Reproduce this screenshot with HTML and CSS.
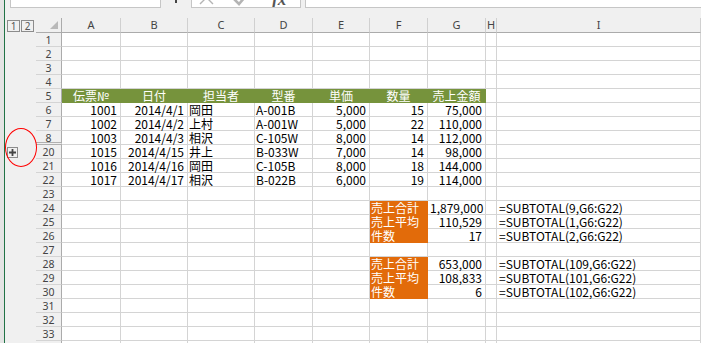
FILE: index.html
```html
<!DOCTYPE html>
<html lang="ja">
<head>
  <meta charset="UTF-8">
  <meta name="viewport" content="width=device-width, initial-scale=1.0">
  <title>SUBTOTAL</title>
  <link rel="stylesheet" href="styles.css">
</head>

<body>
  <div class="edge"></div>
  <div class="window">
    <div class="formula-bar">
      <div class="namebox"><span class="nb-text">B14</span></div>
      <div class="nb-drop"><i></i></div>
      <div class="fxbox">
        <svg width="108" height="7" viewBox="0 0 108 7">
          <path d="M8 -9L21 4M21 -9L8 4" stroke="#b4b4b4" stroke-width="1.4" fill="none"/>
          <path d="M38 -5L47 4L58 -9" stroke="#b4b4b4" stroke-width="2.6" fill="none"/>
          <text x="80" y="5" font-family="Liberation Serif" font-style="italic" font-weight="bold" font-size="17" fill="#555">fx</text>
        </svg>
      </div>
      <div class="input"></div>
    </div>
    <div class="band"></div>

    <div class="colhead">
      <div class="ol">
        <span class="lvl">1</span>
        <span class="lvl">2</span>
      </div>
      <div class="corner"><i></i></div>
      <div class="ch">A</div>
      <div class="ch">B</div>
      <div class="ch">C</div>
      <div class="ch">D</div>
      <div class="ch">E</div>
      <div class="ch">F</div>
      <div class="ch">G</div>
      <div class="ch">H</div>
      <div class="ch">I</div>
    </div>

    <div class="sheet">
      <div class="row"><span class="ol"></span><span class="rh">1</span><span></span><span></span><span></span><span></span><span></span><span></span><span></span><span></span><span></span></div>
      <div class="row"><span class="ol"></span><span class="rh">2</span><span></span><span></span><span></span><span></span><span></span><span></span><span></span><span></span><span></span></div>
      <div class="row"><span class="ol"></span><span class="rh">3</span><span></span><span></span><span></span><span></span><span></span><span></span><span></span><span></span><span></span></div>
      <div class="row"><span class="ol"></span><span class="rh">4</span><span></span><span></span><span></span><span></span><span></span><span></span><span></span><span></span><span></span></div>
      <div class="row">
        <span class="ol"></span><span class="rh">5</span>
        <span class="hd">伝票№</span><span class="hd">日付</span><span class="hd">担当者</span><span class="hd">型番</span>
        <span class="hd">単価</span><span class="hd">数量</span><span class="hd">売上金額</span><span></span><span></span>
      </div>
      <div class="row">
        <span class="ol"></span><span class="rh">6</span>
        <span class="n">1001</span><span class="n">2014/4/1</span><span class="t">岡田</span><span class="t">A-001B</span>
        <span class="n">5,000</span><span class="n">15</span><span class="n">75,000</span><span></span><span></span>
      </div>
      <div class="row">
        <span class="ol"></span><span class="rh">7</span>
        <span class="n">1002</span><span class="n">2014/4/2</span><span class="t">上村</span><span class="t">A-001W</span>
        <span class="n">5,000</span><span class="n">22</span><span class="n">110,000</span><span></span><span></span>
      </div>
      <div class="row">
        <span class="ol"></span><span class="rh hidden-after">8</span>
        <span class="n">1003</span><span class="n">2014/4/3</span><span class="t">相沢</span><span class="t">C-105W</span>
        <span class="n">8,000</span><span class="n">14</span><span class="n">112,000</span><span></span><span></span>
      </div>
      <div class="row">
        <span class="ol">
          <button class="expand">
            <svg width="7" height="7" viewBox="0 0 7 7"><path d="M0 3.5H7M3.5 0V7" stroke="#444" stroke-width="1.8"/></svg>
          </button>
        </span>
        <span class="rh">20</span>
        <span class="n">1015</span><span class="n">2014/4/15</span><span class="t">井上</span><span class="t">B-033W</span>
        <span class="n">7,000</span><span class="n">14</span><span class="n">98,000</span><span></span><span></span>
      </div>
      <div class="row">
        <span class="ol"></span><span class="rh">21</span>
        <span class="n">1016</span><span class="n">2014/4/16</span><span class="t">岡田</span><span class="t">C-105B</span>
        <span class="n">8,000</span><span class="n">18</span><span class="n">144,000</span><span></span><span></span>
      </div>
      <div class="row">
        <span class="ol"></span><span class="rh">22</span>
        <span class="n">1017</span><span class="n">2014/4/17</span><span class="t">相沢</span><span class="t">B-022B</span>
        <span class="n">6,000</span><span class="n">19</span><span class="n">114,000</span><span></span><span></span>
      </div>
      <div class="row"><span class="ol"></span><span class="rh">23</span><span></span><span></span><span></span><span></span><span></span><span></span><span></span><span></span><span></span></div>
      <div class="row">
        <span class="ol"></span><span class="rh">24</span>
        <span></span><span></span><span></span><span></span><span></span>
        <span class="sum">売上合計</span><span class="n">1,879,000</span><span></span><span class="f">=SUBTOTAL(9,G6:G22)</span>
      </div>
      <div class="row">
        <span class="ol"></span><span class="rh">25</span>
        <span></span><span></span><span></span><span></span><span></span>
        <span class="sum">売上平均</span><span class="n">110,529</span><span></span><span class="f">=SUBTOTAL(1,G6:G22)</span>
      </div>
      <div class="row">
        <span class="ol"></span><span class="rh">26</span>
        <span></span><span></span><span></span><span></span><span></span>
        <span class="sum">件数</span><span class="n">17</span><span></span><span class="f">=SUBTOTAL(2,G6:G22)</span>
      </div>
      <div class="row"><span class="ol"></span><span class="rh">27</span><span></span><span></span><span></span><span></span><span></span><span></span><span></span><span></span><span></span></div>
      <div class="row">
        <span class="ol"></span><span class="rh">28</span>
        <span></span><span></span><span></span><span></span><span></span>
        <span class="sum">売上合計</span><span class="n">653,000</span><span></span><span class="f">=SUBTOTAL(109,G6:G22)</span>
      </div>
      <div class="row">
        <span class="ol"></span><span class="rh">29</span>
        <span></span><span></span><span></span><span></span><span></span>
        <span class="sum">売上平均</span><span class="n">108,833</span><span></span><span class="f">=SUBTOTAL(101,G6:G22)</span>
      </div>
      <div class="row">
        <span class="ol"></span><span class="rh">30</span>
        <span></span><span></span><span></span><span></span><span></span>
        <span class="sum">件数</span><span class="n">6</span><span></span><span class="f">=SUBTOTAL(102,G6:G22)</span>
      </div>
      <div class="row"><span class="ol"></span><span class="rh">31</span><span></span><span></span><span></span><span></span><span></span><span></span><span></span><span></span><span></span></div>
      <div class="row"><span class="ol"></span><span class="rh">32</span><span></span><span></span><span></span><span></span><span></span><span></span><span></span><span></span><span></span></div>
      <div class="row"><span class="ol"></span><span class="rh">33</span><span></span><span></span><span></span><span></span><span></span><span></span><span></span><span></span><span></span></div>
      <div class="row"><span class="ol"></span><span class="rh"></span><span></span><span></span><span></span><span></span><span></span><span></span><span></span><span></span><span></span></div>
    </div>

    <div class="ring"></div>
  </div>
</body>
</html>
```

FILE: styles.css
```css
* {
  box-sizing: border-box;
}

:root {
  --cols: 31px 26px 59px 67px 67px 58px 57px 58px 58px 11px 1fr;
  --grid: #d4d4d4;
  --head-line: #ababab;
  --head-bg: #f0f0f0;
}

body {
  margin: 0;
  width: 701px;
  height: 343px;
  overflow: hidden;
  display: flex;
  background: var(--head-bg);
  font-family: "Noto Sans CJK JP", sans-serif;
  color: #000;
}

.edge {
  flex: none;
  width: 5px;
  background: #e4e4e4;
  border-right: 1px solid #217346;
}

.window {
  position: relative;
  flex: 1;
  min-width: 0;
}

/* formula bar, only its bottom edge is in view */
.formula-bar {
  display: flex;
  height: 8px;
}

.namebox {
  display: flex;
  align-items: flex-end;
  width: 151px;
  margin-left: 5px;
  padding: 0 0 5px 9px;
  background: #fff;
  border: 1px solid #c6c6c6;
  border-top: none;
  overflow: hidden;
}

.nb-text {
  font: 12px/1 "Noto Sans", sans-serif;
  color: #222;
}

.nb-drop {
  width: 30px;
  padding-left: 14px;
}

.nb-drop i {
  display: block;
  width: 2px;
  height: 3px;
  background: #444;
}

.fxbox {
  width: 110px;
  background: #fff;
  border: 1px solid #c6c6c6;
  border-top: none;
  overflow: hidden;
}

.fxbox svg {
  display: block;
}

.input {
  flex: 1;
  margin-left: 4px;
  background: #fff;
  border: 1px solid #c6c6c6;
  border-top: none;
  border-right: none;
}

.band {
  height: 10px;
}

/* column headers */
.colhead {
  display: grid;
  grid-template-columns: var(--cols);
  grid-template-rows: 15px;
  height: 15px;
}

.colhead .ol {
  display: flex;
  gap: 1px;
  padding: 2px 0 0 2px;
}

.lvl {
  width: 13px;
  height: 12px;
  border: 1px solid #8c8c8c;
  font: 10px/10px "Noto Sans", sans-serif;
  color: #555;
  text-align: center;
}

.corner {
  display: flex;
  justify-content: flex-end;
  align-items: flex-end;
  padding: 0 3px 3px 0;
  border-right: 1px solid var(--head-line);
  border-bottom: 1px solid var(--head-line);
}

.corner i {
  width: 0;
  height: 0;
  border-left: 8px solid transparent;
  border-bottom: 8px solid #b9b9b9;
}

.ch {
  border-right: 1px solid #d0d0d0;
  border-bottom: 1px solid var(--head-line);
  font: 11px/14px "Noto Sans", sans-serif;
  color: #444;
  text-align: center;
}

/* cells */
.sheet {
  height: 310px;
  overflow: hidden;
}

.row {
  display: grid;
  grid-template-columns: var(--cols);
  grid-template-rows: 14px;
  height: 14px;
}

.row > span {
  min-height: 0;
  padding: 0 2px;
  background: #fff;
  border-right: 1px solid var(--grid);
  border-bottom: 1px solid var(--grid);
  font-size: 12px;
  line-height: 13px;
  white-space: nowrap;
}

.row > .ol {
  padding: 0;
  background: transparent;
  border: none;
}

.row > .rh {
  background: var(--head-bg);
  border-right-color: var(--head-line);
  font: 10.5px/15px "Noto Sans", sans-serif;
  color: #444;
  text-align: center;
}

.row > .rh.hidden-after {
  border-bottom: 3px double #b0b0b0;
}

.row > .n {
  text-align: right;
  padding-right: 3px;
}

.row > .t {
  padding-left: 1px;
}

.row > .hd {
  background: #76933c;
  border-color: #76933c;
  color: #fff;
  text-align: center;
}

.row > .sum {
  background: #e26b0a;
  border-color: #e26b0a;
  color: #fff;
  padding-left: 1px;
}

.row > .f {
  padding-left: 2px;
}

.expand {
  display: flex;
  align-items: center;
  justify-content: center;
  width: 11px;
  height: 11px;
  margin: 2px 0 0 2px;
  padding: 0;
  background: #f0f0f0;
  border: 1px solid #8c8c8c;
}

.expand svg {
  display: block;
}

/* annotation drawn over the outline pane */
.ring {
  position: absolute;
  left: 0;
  top: 128px;
  width: 32px;
  height: 39px;
  border: 1.5px solid #f00;
  border-radius: 50%;
}
```
